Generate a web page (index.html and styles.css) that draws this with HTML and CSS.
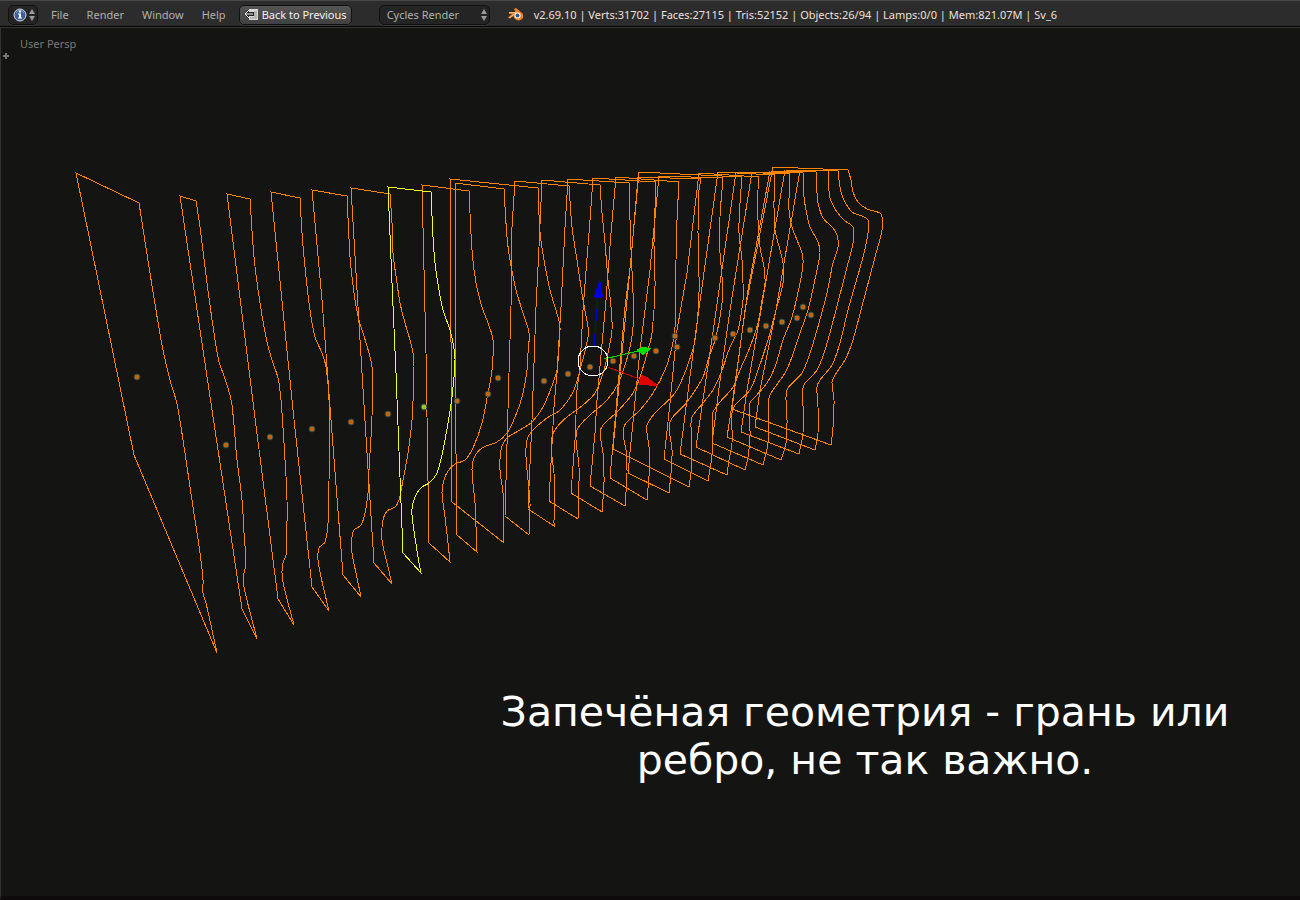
FILE: index.html
```html
<!DOCTYPE html>
<html lang="ru">
<head>
<meta charset="utf-8">
<title>Blender</title>
<link rel="stylesheet" href="styles.css">
</head>
<body>
<header class="bar">
  <button class="box editor" type="button" aria-label="Editor type: Info">
    <svg width="14" height="14" viewBox="0 0 14 14"><circle cx="7" cy="7" r="6" fill="#3d5f9b" stroke="#d5dae2"/><path d="M3 5a4.500 4.500 0 0 1 8 0" fill="none" stroke="#7f9bcb"/><path d="M6 2.500h2v2H6zM5 5.500h3v4h1v1H5v-1h1v-3H5z" fill="#fff"/></svg>
    <svg class="arrows" width="6" height="14" viewBox="0 0 6 14"><path d="M3 1l3 5H0zM3 13l3-5H0z" fill="#999"/></svg>
  </button>
  <nav class="menus">
    <button class="menu" type="button">File</button>
    <button class="menu" type="button">Render</button>
    <button class="menu" type="button">Window</button>
    <button class="menu" type="button">Help</button>
  </nav>
  <button class="box back" type="button">
    <svg width="16" height="14" viewBox="0 0 16 14"><path d="M5 1h9v11H5z" fill="#d8d8d8"/><path d="M10 3h3v8H6v-2h4z" fill="#b4b4b4"/><path d="M0 6l5-5v3h5v4H5v3z" fill="#222"/><path d="M5 2L1 6l4 4M1 6h8" fill="none" stroke="#f4f4f4"/></svg>
    <span>Back to Previous</span>
  </button>
  <div class="engine">
    <select class="box select" aria-label="Render engine"><option>Cycles Render</option></select>
    <svg class="arrows select-arrows" width="6" height="14" viewBox="0 0 6 14"><path d="M3 1l3 5H0zM3 13l3-5H0z" fill="#999"/></svg>
  </div>
  <svg class="logo" width="16" height="14" viewBox="0 0 16 14"><path d="M6 1l2-1 6 5c2 2 1.500 5-.5 6.500-2 1.300-5 1.200-6.500-.5C5.500 9.500 5.500 8.500 5.500 8L2 10.500 0 9.500l4-3.500H1V4.500h6.500z" fill="#ef8420"/><path d="M1 4.500h7L5 7 1 10" fill="none" stroke="#f9b777"/><circle cx="9.500" cy="7.500" r="3" fill="#fff"/><circle cx="9.500" cy="7.500" r="2" fill="#24599e"/></svg>
  <span class="stats">v2.69.10 | Verts:31702 | Faces:27115 | Tris:52152 | Objects:26/94 | Lamps:0/0 | Mem:821.07M | Sv_6</span>
</header>
<main class="viewport">
  <span class="view-name">User Persp</span>
  <svg class="expand" width="6" height="6" viewBox="0 0 6 6"><path d="M2 0h2v2h2v2H4v2H2V4H0V2h2z" fill="#777"/></svg>
  <svg class="scene" role="img" aria-label="Wireframe profiles">
    <g transform="translate(-1 -28)">
      <g class="wire">
        <path d="M76 173L134 455 217 653 206 603 203 593 203 580 200 553 193 507 183 440 177 404 170 380 162 345 149 267 139 203z"/>
        <path d="M180 196L212 410 242 609 257 639 244 587 244 573 246 565 244 533 242 500 237 460 232 405 228 388 223 373 219 362 214 333 207 283 200 227 196 201z"/>
        <path d="M227 194L254 410 278 599 294 625 284 587 282 573 283 563 286 555 287 500 285 460 281 400 278 378 273 363 267 342 260 303 254 257 250 199z"/>
        <path d="M271 192L293 410 312 587 329 611 321 577 318 560 319 548 325 542 328 523 329 483 329 400 326 367 322 353 315 337 310 310 305 267 302 233 300 198z"/>
        <path d="M312 190L322 300 331 420 343 575 361 597 356 573 352 553 352 537 354 530 361 525 365 513 368 493 369 470 371 437 372 417 372 367 369 353 363 333 359 320 355 300 352 277 350 257 347 196z"/>
        <path d="M351 188L360 340 366 437 374 563 392 584 388 567 382 540 383 520 387 511 395 507 399 500 403 480 408 453 412 420 414 367 413 353 410 340 405 323 400 303 397 283 393 253 392 223 390 194z"/>
        <path d="M422 185L426 353 429 543 450 562 448 543 445 517 442 493 444 480 448 471 455 464 465 460 473 448 482 423 488 393 492 370 493 340 488 323 482 307 476 283 472 250 469 191z"/>
        <path d="M455 183L455 370 457 535 477 552 476 527 475 503 472 470 474 458 482 448 497 442 507 433 515 417 522 397 527 370 528 353 529 333 523 313 516 290 510 260 507 237 504 189z"/>
        <path d="M450 179L452 502 504 543 503 493 500 470 501 450 507 438 520 430 532 422 543 407 553 383 557 370 559 347 560 327 558 317 550 290 544 260 540 232 538 188z"/>
        <path d="M515 181L512 227 511 307 509 373 505 516 529 535 530 503 528 480 526 457 527 440 533 430 547 418 560 410 573 392 580 370 588 337 588 327 583 300 577 260 572 227 569 186z"/>
        <path d="M542 180L539 247 536 307 532 420 528 509 554 526 554 473 552 457 552 437 557 427 567 417 583 405 595 393 603 373 608 353 612 330 611 307 608 280 605 243 602 213 600 185z"/>
        <path d="M568 179L565 227 561 307 557 373 554 407 549 501 578 519 579 467 576 440 578 428 590 415 607 400 618 384 626 362 630 347 633 327 633 293 631 250 630 220 629 183z"/>
        <path d="M593 178L590 220 583 310 580 367 577 390 575 440 571 493 602 512 604 483 603 453 600 433 603 425 617 412 633 393 640 377 648 350 652 333 655 287 654 243 656 182z"/>
        <path d="M616 177L611 233 606 300 597 400 595 433 590 486 625 506 627 473 626 450 623 433 626 423 640 410 653 393 665 370 672 347 675 327 676 260 677 220 679 182z"/>
        <path d="M638 177L631 260 625 307 616 410 610 478 647 500 650 457 647 433 647 425 655 413 675 393 687 367 695 340 699 293 698 233 699 190 701 179z"/>
        <path d="M659 176L650 270 640 350 628 473 669 493 671 473 672 450 669 427 672 418 687 402 703 377 708 360 716 337 722 303 722 277 720 253 720 217 723 178z"/>
        <path d="M639 172L628 290 613 449 689 487 691 473 692 457 691 427 692 417 703 403 713 390 721 373 730 347 738 330 743 300 743 283 742 260 739 233 740 203 742 177z"/>
        <path d="M699 173L687 273 677 330 670 403 664 459 708 481 711 463 713 443 712 417 713 412 720 402 733 387 740 370 750 347 758 323 762 300 765 283 764 267 760 247 758 220 758 190 759 177z"/>
        <path d="M718 172L696 330 680 454 727 475 729 460 732 443 732 413 735 405 750 390 758 370 768 340 776 310 783 283 783 263 780 250 775 230 774 203 775 175z"/>
        <path d="M736 172L714 325 696 447 745 470 748 457 750 437 750 403 755 397 767 383 775 367 783 340 792 317 800 283 803 263 802 253 797 240 792 227 789 210 790 174z"/>
        <path d="M752 172L730 310 721 373 712 443 763 465 768 443 769 398 773 390 785 373 792 357 800 333 808 310 817 270 820 253 818 242 810 227 806 210 804 197 803 173z"/>
        <path d="M770 171L748 290 732 405 727 437 781 460 786 443 787 420 786 397 788 388 802 373 810 353 817 330 827 293 833 263 838 247 837 235 832 227 823 218 818 203 817 193 816 172z"/>
        <path d="M785 170L761 310 747 390 741 432 799 454 803 433 803 388 805 383 817 370 825 350 836 310 847 267 853 243 853 227 845 221 837 212 830 198 828 171z"/>
        <path d="M800 170L776 310 760 390 755 427 815 450 818 433 818 407 817 387 820 380 832 365 840 343 848 310 863 257 868 233 868 220 862 216 852 212 843 198 840 187 838 171z"/>
        <path d="M773 167L745 310 732 409 831 445 833 427 834 400 832 382 835 375 845 360 852 343 861 310 875 257 882 230 882 217 880 213 867 209 858 202 853 192 851 180 848 170z"/>
        <path class="active" d="M388 187L392 283 396 373 401 503 403 553 421 573 418 557 412 515 413 503 417 493 422 487 429 483 437 473 443 450 448 423 452 397 455 360 453 343 450 330 443 310 439 290 435 263 433 237 431 192z"/>
      </g>
      <g class="origins">
        <circle cx="137" cy="377" r="3"/><circle cx="226" cy="445" r="3"/><circle cx="270" cy="437" r="3"/><circle cx="312" cy="429" r="3"/><circle cx="351" cy="422" r="3"/><circle cx="388" cy="414" r="3"/><circle class="picked" cx="424" cy="407" r="3"/><circle cx="457" cy="401" r="3"/><circle cx="488" cy="394" r="3"/><circle cx="498" cy="378" r="3"/><circle cx="544" cy="381" r="3"/><circle cx="568" cy="374" r="3"/><circle cx="590" cy="367" r="3"/><circle cx="613" cy="361" r="3"/><circle cx="634" cy="356" r="3"/><circle cx="656" cy="351" r="3"/><circle cx="677" cy="347" r="3"/><circle cx="675" cy="336" r="3"/><circle cx="715" cy="338" r="3"/><circle cx="733" cy="334" r="3"/><circle cx="750" cy="330" r="3"/><circle cx="766" cy="326" r="3"/><circle cx="782" cy="322" r="3"/><circle cx="797" cy="318" r="3"/><circle cx="811" cy="315" r="3"/><circle cx="803" cy="307" r="3"/>
      </g>
      <g class="gizmo">
        <path d="M594 346L598 297" stroke="#0000d8"/><path d="M600 279L594 297 598 298 603 297z" fill="#0000e0"/>
        <path d="M604 359L638 351" stroke="#00d800"/><path d="M636 350L642 347 652 348 643 355z" fill="#00e000"/>
        <path d="M605 366L642 380" stroke="#d80000"/><path d="M641 375L647 377 659 386 639 385z" fill="#e00000"/>
        <circle cx="593" cy="361" r="15" fill="none" stroke="#fff"/>
      </g>
    </g>
  </svg>
  <p class="caption">Запечёная геометрия - грань или ребро, не так важно.</p>
</main>
<script src="script.js"></script>
</body>
</html>
```
FILE: script.js
```
// Each profile has straight edges up to its lowest vertex; the rest is a smooth curve.
for (const path of document.querySelectorAll(".wire path")) {
  const n = path.getAttribute("d").match(/\d+/g).map(Number);
  const p = [];
  for (let i = 0; i < n.length; i += 2) p.push([n[i], n[i + 1]]);
  const tip = p.reduce((best, q, i) => (q[1] > p[best][1] ? i : best), 0);
  let d = "M" + p.slice(0, tip + 1).join("L");
  for (let i = tip; i < p.length - 1; i++) {
    const before = p[Math.max(i - 1, tip)], a = p[i], b = p[i + 1], after = p[Math.min(i + 2, p.length - 1)];
    // Handles are scaled to the segment so uneven spacing does not overshoot.
    const len = (u, v) => Math.hypot(u[0] - v[0], u[1] - v[1]);
    const ab = len(a, b);
    const ka = ab / (len(before, a) + ab) / 3, kb = ab / (ab + len(b, after)) / 3;
    d += `C${a[0] + (b[0] - before[0]) * ka} ${a[1] + (b[1] - before[1]) * ka} ${b[0] - (after[0] - a[0]) * kb} ${b[1] - (after[1] - a[1]) * kb} ${b[0]} ${b[1]}`;
  }
  path.setAttribute("d", d + "Z");
}
```
FILE: styles.css
```css
* { box-sizing: border-box; }
body {
  margin: 0;
  min-height: 100vh;
  display: flex;
  flex-direction: column;
  background: #141412;
  color: #b0b0b0;
  font: 11px/14px "Noto Sans", "DejaVu Sans", sans-serif;
}
.bar {
  display: flex;
  align-items: center;
  height: 27px;
  padding: 2px 8px 0;
  background: #2c2c2c;
  border-top: 1px solid #484848;
  border-bottom: 1px solid #000;
  white-space: nowrap;
}
button, select { font: inherit; color: inherit; }
.box {
  height: 20px;
  border: 1px solid #111;
  border-radius: 5px;
  background: #242424;
  box-shadow: 0 1px 0 #3a3a3a;
}
.editor {
  display: flex;
  align-items: center;
  gap: 2px;
  width: 30px;
  padding: 0 4px;
}
.editor svg { flex: none; }
.menus { display: flex; margin: 0 4px; }
.menu {
  padding: 0 9px;
  border: 0;
  background: none;
}
.back {
  display: flex;
  align-items: center;
  gap: 2px;
  min-width: 113px;
  padding: 0 4px;
  background: linear-gradient(#555, #404040);
  color: #f2f2f2;
}
.engine { position: relative; margin-left: 27px; }
.select {
  display: block;
  width: 111px;
  padding: 0 7px;
  appearance: none;
}
.select-arrows {
  position: absolute;
  right: 3px;
  top: 3px;
  pointer-events: none;
}
.logo { margin-left: 18px; }
.stats { margin-left: 10px; color: #f0e0dc; }
.viewport {
  position: relative;
  flex: 1;
  overflow: hidden;
  border-top: 1px solid #383838;
  border-left: 1px solid #343434;
  border-bottom: 4px solid #0e0a0c;
}
.view-name {
  position: absolute;
  left: 19px;
  top: 9px;
  color: #7a7a7a;
}
.expand { position: absolute; left: 2px; top: 25px; }
.scene {
  position: absolute;
  left: 0;
  top: 0;
  width: 100%;
  height: 100%;
}
.wire {
  fill: none;
  stroke: #ff8500;
  stroke-width: 1;
  shape-rendering: crispEdges;
}
.wire .active { stroke: #f2ff1c; }
.origins { fill: #c06510; stroke: #24484a; stroke-width: 1; }
.origins .picked { fill: #a5c416; }
.gizmo { stroke-width: 1; shape-rendering: crispEdges; }
.caption {
  position: absolute;
  right: 60px;
  bottom: 112px;
  width: 750px;
  margin: 0;
  color: #fff;
  font-family: "DejaVu Sans", sans-serif;
  font-size: 41px;
  line-height: 48px;
  text-align: center;
}
```
